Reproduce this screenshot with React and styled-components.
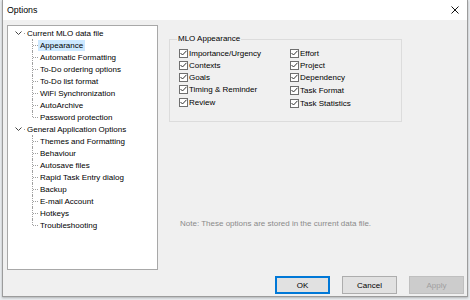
import React from 'react';
import styled, { createGlobalStyle } from 'styled-components';

const GlobalStyle = createGlobalStyle`
  html, body {
    margin: 0;
    padding: 0;
    background: #e9ecef;
  }
  body {
    font-family: "Liberation Sans", Arial, sans-serif;
    font-size: 8px;
    color: #000;
  }
`;

const treeGroups = [
  {
    title: 'Current MLO data file',
    items: [
      'Appearance',
      'Automatic Formatting',
      'To-Do ordering options',
      'To-Do list format',
      'WiFi Synchronization',
      'AutoArchive',
      'Password protection',
    ],
  },
  {
    title: 'General Application Options',
    items: [
      'Themes and Formatting',
      'Behaviour',
      'Autosave files',
      'Rapid Task Entry dialog',
      'Backup',
      'E-mail Account',
      'Hotkeys',
      'Troubleshooting',
    ],
  },
];

const leftChecks = [
  { label: 'Importance/Urgency' },
  { label: 'Contexts' },
  { label: 'Goals' },
  { label: 'Timing & Reminder' },
  { label: 'Review', extra: true },
];

const rightChecks = [
  { label: 'Effort' },
  { label: 'Project' },
  { label: 'Dependency' },
  { label: 'Task Format', extra: true },
  { label: 'Task Statistics', extra: true },
];

const Page = styled.div`
  width: 470px;
  height: 300px;
  padding-left: 2px;
  box-sizing: border-box;
  overflow: hidden;
`;

const Dialog = styled.div`
  width: 466px;
  height: 297px;
  box-sizing: border-box;
  background: #f0f0f0;
  border: 1px solid #9c9c9c;
  border-top: none;
  box-shadow: 0 1px 2px rgba(0, 0, 0, 0.25);
  display: flex;
  flex-direction: column;
`;

const TitleBar = styled.div`
  height: 20px;
  background: #fff;
  display: flex;
  align-items: center;
  justify-content: space-between;
  padding: 0 8px 0 4px;
  flex-shrink: 0;
`;

const Title = styled.span`
  font-size: 8.8px;
  color: #000;
`;

const Body = styled.div`
  flex: 1;
  display: flex;
  padding: 5px 0 0 4px;
  gap: 11px;
`;

const TreeBox = styled.div`
  width: 151px;
  height: 245px;
  box-sizing: border-box;
  background: #fff;
  border: 1px solid #a8a8a8;
  padding: 1px 0 0 7px;
`;

const GroupHead = styled.div`
  height: 12px;
  display: flex;
  align-items: center;
`;

const Chevron = styled.svg`
  width: 7px;
  height: 5px;
  margin-right: 2px;
`;

const HeadDot = styled.span`
  width: 1px;
  height: 1px;
  background: #a0a0a0;
  margin-right: 2px;
`;

const ChildList = styled.div`
  padding-left: 17px;
`;

const ChildRow = styled.div`
  position: relative;
  height: 12px;
  display: flex;
  align-items: center;
  padding-left: 8px;

  &::before {
    content: '';
    position: absolute;
    left: 0;
    top: 0;
    height: ${(p) => (p.$last ? '6px' : '12px')};
    border-left: 1px dotted #a0a0a0;
  }

  &::after {
    content: '';
    position: absolute;
    left: 1px;
    top: 6px;
    width: 5px;
    border-top: 1px dotted #a0a0a0;
  }
`;

const ChildLabel = styled.span`
  padding: 1px 2px;
  margin-left: -2px;
  background: ${(p) => (p.$selected ? '#cce8ff' : 'transparent')};
`;

const RightPane = styled.div`
  flex: 1;
  display: flex;
  flex-direction: column;
  padding-top: 10px;
`;

const GroupBox = styled.fieldset`
  width: 222px;
  height: 87px;
  box-sizing: border-box;
  margin: 0;
  border: 1px solid #dcdcdc;
  padding: 4px 0 0 9px;
  display: flex;
  gap: 0;
`;

const Legend = styled.legend`
  padding: 0 1px;
  margin-left: -2px;
  font-size: 8px;
  line-height: 8px;
`;

const CheckColumn = styled.div`
  width: 111px;
  display: flex;
  flex-direction: column;
`;

const CheckRow = styled.label`
  height: 12px;
  margin-top: ${(p) => (p.$extra ? '1px' : '0')};
  display: flex;
  align-items: center;
  gap: 1px;
`;

const Box = styled.span`
  width: 9px;
  height: 9px;
  box-sizing: border-box;
  border: 1px solid #6f6f6f;
  background: #fff;
  display: flex;
  align-items: center;
  justify-content: center;
`;

const Note = styled.div`
  margin-top: 97px;
  margin-left: 11px;
  color: #8a8a8a;
  font-size: 8px;
`;

const Footer = styled.div`
  height: 24px;
  display: flex;
  justify-content: flex-end;
  align-items: flex-start;
  gap: 12px;
  padding: 6px 3px 0 0;
`;

const Button = styled.button`
  width: 55px;
  height: 18px;
  box-sizing: border-box;
  font-family: "Liberation Sans", Arial, sans-serif;
  font-size: 8px;
  padding: 0;
  background: ${(p) => (p.disabled ? '#cccccc' : '#e1e1e1')};
  color: ${(p) => (p.disabled ? '#a0a0a0' : '#000')};
  border: 1px solid ${(p) => (p.$primary ? '#0078d7' : p.disabled ? '#bfbfbf' : '#adadad')};
  box-shadow: ${(p) => (p.$primary ? 'inset 0 0 0 1px #0078d7' : 'none')};
`;

const Check = () => (
  <Box>
    <svg width="7" height="6" viewBox="0 0 7 6">
      <path d="M0.5 3 L2.5 5 L6.5 0.8" fill="none" stroke="#333" strokeWidth="1" />
    </svg>
  </Box>
);

const CheckColumnView = ({ items }) => (
  <CheckColumn>
    {items.map((c) => (
      <CheckRow key={c.label} $extra={c.extra}>
        <Check />
        {c.label}
      </CheckRow>
    ))}
  </CheckColumn>
);

export default function App() {
  return (
    <>
      <GlobalStyle />
      <Page>
        <Dialog>
          <TitleBar>
            <Title>Options</Title>
            <svg width="8" height="8" viewBox="0 0 8 8">
              <path d="M0.5 0.5 L7.5 7.5 M7.5 0.5 L0.5 7.5" stroke="#111" strokeWidth="1" />
            </svg>
          </TitleBar>
          <Body>
            <TreeBox>
              {treeGroups.map((g) => (
                <div key={g.title}>
                  <GroupHead>
                    <Chevron viewBox="0 0 7 5">
                      <path d="M0.5 0.5 L3.5 3.5 L6.5 0.5" fill="none" stroke="#444" strokeWidth="1" />
                    </Chevron>
                    <HeadDot />
                    {g.title}
                  </GroupHead>
                  <ChildList>
                    {g.items.map((item, i) => (
                      <ChildRow key={item} $last={i === g.items.length - 1}>
                        <ChildLabel $selected={item === 'Appearance'}>{item}</ChildLabel>
                      </ChildRow>
                    ))}
                  </ChildList>
                </div>
              ))}
            </TreeBox>
            <RightPane>
              <GroupBox>
                <Legend>MLO Appearance</Legend>
                <CheckColumnView items={leftChecks} />
                <CheckColumnView items={rightChecks} />
              </GroupBox>
              <Note>Note: These options are stored in the current data file.</Note>
            </RightPane>
          </Body>
          <Footer>
            <Button $primary>OK</Button>
            <Button>Cancel</Button>
            <Button disabled>Apply</Button>
          </Footer>
        </Dialog>
      </Page>
    </>
  );
}
